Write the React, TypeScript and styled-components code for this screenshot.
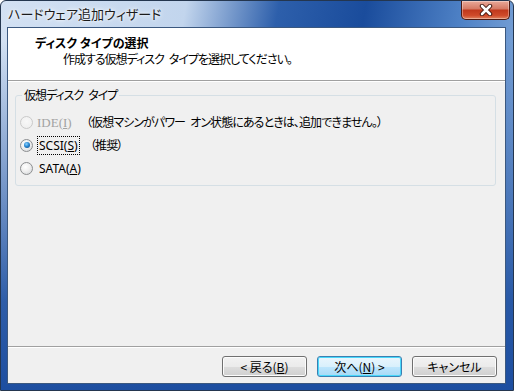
import styled, { createGlobalStyle } from "styled-components";

const GlobalStyle = createGlobalStyle`
  html, body {
    margin: 0;
    padding: 0;
    overflow: hidden;
    background: #ffffff;
  }
`;

const jp = `"Noto Sans CJK JP", "Noto Sans", sans-serif`;

const Window = styled.div`
  box-sizing: border-box;
  width: 514px;
  height: 391px;
  display: flex;
  flex-direction: column;
  border: 1px solid #24364f;
  border-radius: 6px 6px 0 0;
  padding: 0 7px 6px 6px;
  font-family: ${jp};
  font-feature-settings: "palt";
  background:
    linear-gradient(to bottom, rgba(29, 79, 160, 0) 0px, rgba(29, 79, 160, 0) 40px, rgba(29, 79, 160, 0.9) 300px, #1d4ea0 389px),
    linear-gradient(100deg, #d3e1f3 0%, #c2d5ed 32%, #2d5fab 48%, #1a4c9c 63%, #4f82c6 80%, #9bbbe3 100%);
`;

const TitleBar = styled.div`
  height: 26px;
  display: flex;
  align-items: flex-start;
  justify-content: space-between;
  padding-left: 1px;
  margin-right: -4px;
`;

const Caption = styled.span`
  margin-top: 5px;
  font-size: 13px;
  line-height: 16px;
  color: #1b1b1b;
  text-shadow: 0 0 6px #ffffff, 0 0 3px #ffffff;
`;

const CloseButton = styled.div`
  box-sizing: border-box;
  width: 49px;
  height: 19px;
  display: flex;
  align-items: center;
  justify-content: center;
  border: 1px solid #4e1a12;
  border-top: none;
  border-radius: 0 0 5px 5px;
  background: linear-gradient(to bottom, #e9a999 0%, #d67b66 42%, #c1391d 52%, #cf4a2a 80%, #e0835f 100%);
  box-shadow: inset 0 0 0 1px rgba(255, 255, 255, 0.35);
`;

const Client = styled.div`
  flex: 1;
  display: flex;
  flex-direction: column;
  border: 1px solid #3b587f;
  background: #f0f0f0;
`;

const Header = styled.div`
  height: 53px;
  box-sizing: border-box;
  padding: 7px 0 0 27px;
  background: #ffffff;
  border-bottom: 1px solid #a0a0a0;
`;

const HeaderTitle = styled.div`
  font-size: 12px;
  line-height: 16px;
  font-weight: bold;
  color: #000000;
`;

const HeaderText = styled.div`
  margin: 0 0 0 28px;
  font-size: 12px;
  line-height: 16px;
  letter-spacing: -1px;
  color: #000000;
`;

const Body = styled.div`
  flex: 1;
  border-top: 1px solid #ffffff;
  padding-top: 5px;
`;

const Group = styled.fieldset`
  box-sizing: border-box;
  height: 99px;
  margin: 0 9px 0 7px;
  padding: 8px 0 0 4px;
  border: 1px solid #d5dfe5;
  border-radius: 3px;
  display: flex;
  flex-direction: column;
  gap: 1px;
`;

const Legend = styled.legend`
  margin-left: 2px;
  padding: 0 2px;
  font-size: 12px;
  line-height: 16px;
  letter-spacing: -1px;
  color: #000000;
`;

const Row = styled.div`
  height: 22px;
  display: flex;
  align-items: center;
`;

const Radio = styled.span<{ $checked?: boolean; $disabled?: boolean }>`
  position: relative;
  box-sizing: border-box;
  width: 13px;
  height: 13px;
  flex: none;
  border-radius: 50%;
  border: 1px solid ${({ $disabled }) => ($disabled ? "#cacaca" : "#8c8e90")};
  background: ${({ $disabled }) =>
    $disabled
      ? "radial-gradient(circle at 50% 40%, #f8f8f8 0%, #ececec 100%)"
      : "radial-gradient(circle at 40% 35%, #ffffff 0%, #f0f0f0 45%, #cfd2d5 100%)"};

  &::after {
    content: "";
    display: ${({ $checked }) => ($checked ? "block" : "none")};
    position: absolute;
    left: 2.5px;
    top: 2.5px;
    width: 6px;
    height: 6px;
    border-radius: 50%;
    background: radial-gradient(circle at 40% 35%, #8fd3ff 0%, #2a8ad4 45%, #0d3d78 100%);
  }
`;

const Option = styled.span<{ $disabled?: boolean; $focused?: boolean }>`
  width: 50px;
  margin-left: ${({ $disabled }) => ($disabled ? "3px" : "5px")};
  font-family: ${({ $disabled }) =>
    $disabled ? `"Liberation Serif", "Noto Sans CJK JP", serif` : `"Noto Sans", "Noto Sans CJK JP", sans-serif`};
  font-size: ${({ $disabled }) => ($disabled ? "13px" : "12px")};
  line-height: 15px;
  color: ${({ $disabled }) => ($disabled ? "#a3a3a3" : "#000000")};

  & > span {
    padding: 0 1px;
    outline: ${({ $focused }) => ($focused ? "1px dotted #000000" : "none")};
  }
`;

const Note = styled.span<{ $shift?: number }>`
  margin-left: ${({ $shift }) => $shift ?? 0}px;
  font-size: 12px;
  line-height: 16px;
  letter-spacing: -0.9px;
  color: #000000;
`;

const Footer = styled.div`
  height: 37px;
  box-sizing: border-box;
  display: flex;
  justify-content: flex-end;
  gap: 10px;
  padding: 9px 8px 0 0;
  border-top: 1px solid #a0a0a0;
  box-shadow: inset 0 1px 0 #ffffff;
`;

const Button = styled.div<{ $default?: boolean }>`
  box-sizing: border-box;
  width: 85px;
  height: 21px;
  display: flex;
  align-items: center;
  justify-content: center;
  font-size: 12px;
  color: #000000;
  border: 1px solid ${({ $default }) => ($default ? "#3c7fb1" : "#707070")};
  border-radius: 3px;
  box-shadow: inset 0 0 0 1px ${({ $default }) => ($default ? "#48d8fb" : "#fcfcfc")};
  background: ${({ $default }) =>
    $default
      ? "linear-gradient(to bottom, #eaf6fd 0%, #d9f0fc 50%, #bee6fd 51%, #a7d9f5 100%)"
      : "linear-gradient(to bottom, #f2f2f2 0%, #ebebeb 50%, #dddddd 51%, #cfcfcf 100%)"};
`;

const Key = styled.u`
  text-underline-offset: 1px;
`;

const CloseGlyph = () => (
  <svg width="14" height="12" viewBox="0 0 14 12">
    <path d="M3 2 L11 10 M11 2 L3 10" stroke="#3a1008" strokeWidth="4.4" strokeLinecap="round" />
    <path d="M3 2 L11 10 M11 2 L3 10" stroke="#ffffff" strokeWidth="2.6" strokeLinecap="round" />
  </svg>
);

export default function App() {
  return (
    <>
      <GlobalStyle />
      <Window>
        <TitleBar>
          <Caption>ハードウェア追加ウィザード</Caption>
          <CloseButton>
            <CloseGlyph />
          </CloseButton>
        </TitleBar>
        <Client>
          <Header>
            <HeaderTitle>ディスク タイプの選択</HeaderTitle>
            <HeaderText>作成する仮想ディスク{"\u2002"}タイプを選択してください。</HeaderText>
          </Header>
          <Body>
            <Group>
              <Legend>仮想ディスク{"\u2002"}タイプ</Legend>
              <Row>
                <Radio $disabled />
                <Option $disabled>
                  <span>
                    IDE(<Key>I</Key>)
                  </span>
                </Option>
                <Note>（仮想マシンがパワー{"\u2002"}オン状態にあるときは、追加できません。）</Note>
              </Row>
              <Row>
                <Radio $checked />
                <Option $focused>
                  <span>
                    SCSI(<Key>S</Key>)
                  </span>
                </Option>
                <Note $shift={2}>（推奨）</Note>
              </Row>
              <Row>
                <Radio />
                <Option>
                  <span>
                    SATA(<Key>A</Key>)
                  </span>
                </Option>
              </Row>
            </Group>
          </Body>
          <Footer>
            <Button>
              &lt; 戻る(<Key>B</Key>)
            </Button>
            <Button $default>
              次へ(<Key>N</Key>) &gt;
            </Button>
            <Button>キャンセル</Button>
          </Footer>
        </Client>
      </Window>
    </>
  );
}
